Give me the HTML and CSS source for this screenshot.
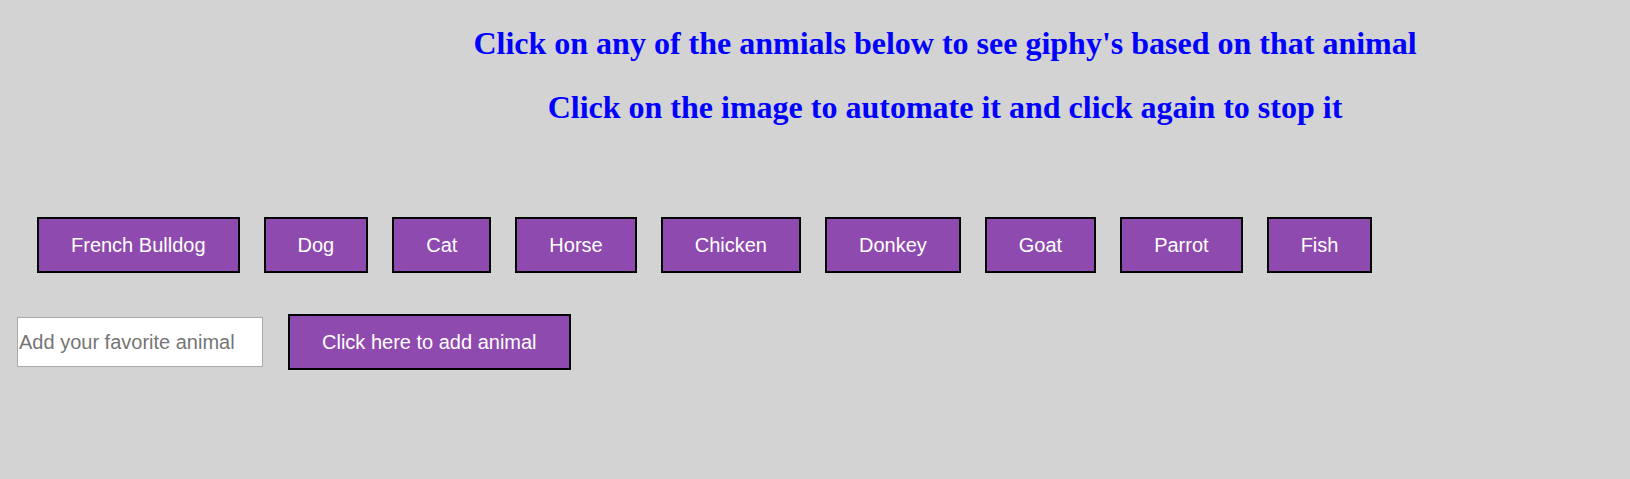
FILE: index.html
```html
<!DOCTYPE html>
<html lang="en">
<head>
<meta charset="utf-8">
<title>Giphy Animals</title>
<link rel="stylesheet" href="styles.css">
</head>
<body>
  <header class="intro">
    <h1 class="intro-title">Click on any of the anmials below to see giphy's based on that animal</h1>
    <h1 class="intro-title">Click on the image to automate it and click again to stop it</h1>
  </header>
  <div class="animal-buttons">
    <button class="animal-btn">French Bulldog</button>
    <button class="animal-btn">Dog</button>
    <button class="animal-btn">Cat</button>
    <button class="animal-btn">Horse</button>
    <button class="animal-btn">Chicken</button>
    <button class="animal-btn">Donkey</button>
    <button class="animal-btn">Goat</button>
    <button class="animal-btn">Parrot</button>
    <button class="animal-btn">Fish</button>
  </div>
  <form class="add-form">
    <input class="add-input" type="text" placeholder="Add your favorite animal">
    <button class="animal-btn" type="button">Click here to add animal</button>
  </form>
</body>
</html>
```

FILE: styles.css
```css
html, body {
  margin: 0;
  padding: 0;
}

body {
  background: #d3d3d3;
  font-family: "Liberation Serif", "Times New Roman", serif;
  min-height: 479px;
}

.intro {
  padding: 25px 8px 0 268px;
}

.intro-title {
  margin: 0;
  font-size: 32px;
  line-height: 36px;
  font-weight: bold;
  color: #0000ff;
  text-align: center;
}

.intro-title + .intro-title {
  margin-top: 28px;
}

.animal-buttons {
  display: flex;
  gap: 24px;
  padding-left: 37px;
  margin-top: 92px;
}

.animal-btn {
  box-sizing: border-box;
  height: 56px;
  padding: 0 32px;
  margin: 0;
  font-family: "Liberation Sans", Arial, sans-serif;
  font-size: 20px;
  color: #ffffff;
  background: #8e4aae;
  border: 2px solid #000000;
  border-radius: 0;
}

.add-form {
  display: flex;
  align-items: center;
  gap: 25px;
  padding-left: 17px;
  margin: 41px 0 0;
}

.add-input {
  box-sizing: border-box;
  width: 246px;
  height: 50px;
  margin: 0;
  padding: 0 1px;
  font-family: "Liberation Sans", Arial, sans-serif;
  font-size: 20px;
  color: #000;
  background: #ffffff;
  border: 1px solid #a9a9a9;
  border-radius: 0;
}

.add-input::placeholder {
  color: #757575;
}
```
